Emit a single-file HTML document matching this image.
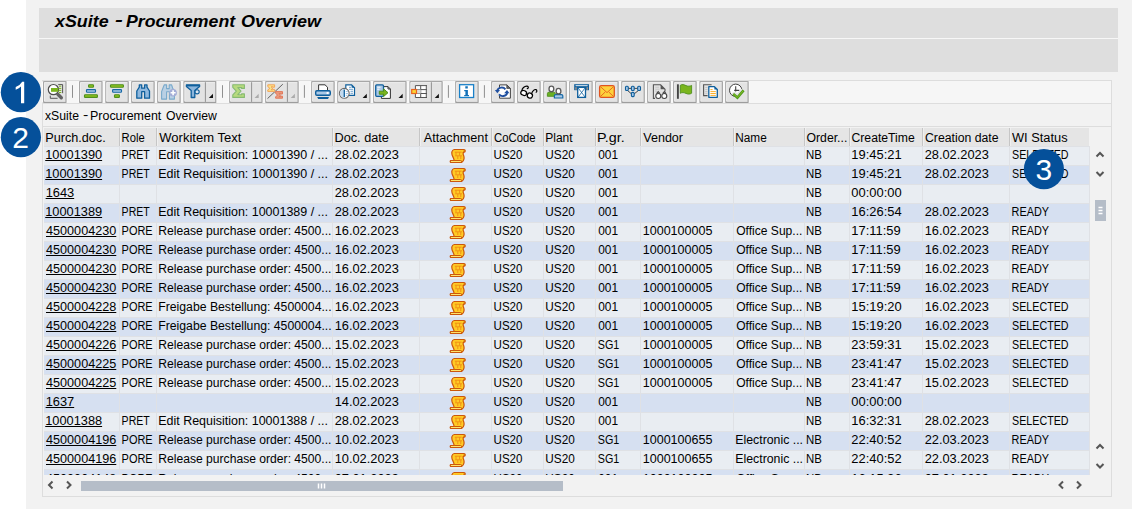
<!DOCTYPE html>
<html>
<head>
<meta charset="utf-8">
<title>xSuite - Procurement Overview</title>
<style>
html,body{margin:0;padding:0;}
body{width:1132px;height:509px;overflow:hidden;background:#fff;position:relative;font-family:"Liberation Sans",sans-serif;font-size:12px;color:#000;}
.abs{position:absolute;}
#bg{left:26px;top:0;width:1106px;height:509px;background:#f2f2f2;}
#bar1{left:39px;top:8px;width:1079px;height:30px;background:#dedede;}
#bar2{left:39px;top:39px;width:1079px;height:33px;background:#dedede;}
#barline{left:39px;top:38px;width:1079px;height:1px;background:#f7f7f7;}
#title{left:0;top:11.2px;font-size:17px;font-weight:bold;font-style:italic;line-height:22px;white-space:nowrap;color:#000;}
#panel{left:42px;top:80px;width:1070px;height:417px;border:1px solid #dddddd;box-sizing:border-box;}
.hl{left:43px;width:1068px;height:1px;background:#dddddd;}
#subtitle{left:0;top:109px;line-height:15px;white-space:nowrap;}
.w{position:absolute;top:0;transform-origin:0 50%;white-space:nowrap;}
.circle{width:40px;height:40px;border-radius:50%;background:#05509a;color:#fff;font-size:29px;line-height:40px;text-align:center;}
/* toolbar */
.tb{top:81px;height:22px;box-sizing:border-box;border:1px solid #a9a9a9;background:#e1e1e1;}
.tb svg{position:absolute;left:0;top:0;}
.tsep{top:85px;width:1px;height:13px;background:#8c8c8c;}
/* grid */
#gridwrap{left:44px;top:128px;width:1046px;height:347px;overflow:hidden;}
table.grid{border-collapse:separate;border-spacing:0;table-layout:fixed;width:1046px;}
.grid th{height:18px;box-sizing:border-box;padding:0 0 0 2px;background:#e5e5e5;font-weight:normal;text-align:left;white-space:nowrap;overflow:hidden;border-right:1px solid #c6c6c6;line-height:16px;padding-top:2px;vertical-align:top;}
.grid th:last-child{border-right:1px solid #f2f2f2;}
.grid th+th{border-left:1px solid #efefef;padding-left:1px;}
.grid td{height:19px;box-sizing:border-box;padding:0 0 0 3px;white-space:nowrap;overflow:hidden;border-right:1px solid #dfe1e5;border-top:1px solid #dfe1e5;line-height:16px;vertical-align:top;}
.grid tbody tr:nth-child(odd) td{background:#e9edf2;}
.grid tbody tr:nth-child(even) td{background:#d6e0f1;}
.grid td.c5{text-align:left;padding:0;line-height:0;}
.grid td.c1{padding-left:2px;}
.t{display:inline-block;transform-origin:0 50%;white-space:nowrap;}
svg.att{display:block;margin:0.5px 0 0 28.7px;}
.chev{fill:none;stroke:#555;stroke-width:2;}
#vthumb{left:1095px;top:200px;width:11px;height:21px;background:#b5bdc8;}
#hbar{left:81px;top:481px;width:482px;height:10px;background:#b5bdc8;}
</style>
</head>
<body>

<div id="bg" class="abs"></div>
<div id="bar1" class="abs"></div>
<div id="barline" class="abs"></div>
<div id="bar2" class="abs"></div>
<div id="title" class="abs"><span class="w" style="left:55.39px;transform:scaleX(1.0498)">xSuite</span><span class="w" style="left:115.31px;transform:translateY(-1.6px) scaleX(1.378)">-</span><span class="w" style="left:125.84px;transform:scaleX(1.0404)">Procurement</span><span class="w" style="left:241.2px;transform:scaleX(1.06)">Overview</span></div>

<div id="panel" class="abs"></div>
<div class="abs" style="left:43px;top:81px;width:1068px;height:22px;background:#f6f6f6"></div>
<div class="abs hl" style="top:103px"></div>
<div class="abs hl" style="top:126px"></div>

<svg class="abs" style="left:40px;top:78px" width="720" height="28" viewBox="40 78 720 28">
<path d="M42.50 81.4V102.3M67.20 81.4V102.3" fill="none" stroke="#fafafa" stroke-width="1.4"/>
<rect x="43.70" y="81.7" width="22.30" height="20.7" fill="#e3e3e3" stroke="#929292" stroke-width="0.95"/>
<path d="M44.50 101V82.6H65.20" fill="none" stroke="#f4f4f4" stroke-width="0.8"/>
<g>
<path d="M58.2 84.6H62.6V93.2" fill="none" stroke="#555" stroke-width="1"/>
<path d="M50.3 95.6V98.3H57.6" fill="none" stroke="#555" stroke-width="1"/>
<path d="M59 86.2H61.3M59 88.4H61.3M59 90.4H61.3M59 92.5H61.3" stroke="#7ab51d" stroke-width="1"/>
<circle cx="53.4" cy="89.6" r="5.1" fill="#fff" stroke="#4d4d4d" stroke-width="1.2"/>
<rect x="51" y="88" width="7.3" height="3.8" fill="#7ab51d"/>
<path d="M57.8 94.3L61.3 97.7" stroke="#636363" stroke-width="3.4" stroke-linecap="round"/>
</g>
<path d="M72.5 85.2V97.8" stroke="#8f8f8f" stroke-width="1"/>
<path d="M78.50 81.4V102.3M103.20 81.4V102.3" fill="none" stroke="#fafafa" stroke-width="1.4"/>
<rect x="79.70" y="81.7" width="22.30" height="20.7" fill="#e3e3e3" stroke="#929292" stroke-width="0.95"/>
<path d="M80.50 101V82.6H101.20" fill="none" stroke="#f4f4f4" stroke-width="0.8"/>
<rect x="88.6" y="84.7" width="4.90" height="2.50" rx="0.7" fill="#8dc21f" stroke="#4f8f1e" stroke-width="1.15"/>
<rect x="86.5" y="89.6" width="9.00" height="2.70" rx="0.7" fill="#a9c8e6" stroke="#1668a6" stroke-width="1.15"/>
<rect x="84.5" y="94.7" width="12.90" height="2.70" rx="0.7" fill="#8dc21f" stroke="#4f8f1e" stroke-width="1.15"/>
<path d="M104.70 81.4V102.3M129.40 81.4V102.3" fill="none" stroke="#fafafa" stroke-width="1.4"/>
<rect x="105.90" y="81.7" width="22.30" height="20.7" fill="#e3e3e3" stroke="#929292" stroke-width="0.95"/>
<path d="M106.70 101V82.6H127.40" fill="none" stroke="#f4f4f4" stroke-width="0.8"/>
<rect x="110.5" y="84.7" width="12.90" height="2.50" rx="0.7" fill="#8dc21f" stroke="#4f8f1e" stroke-width="1.15"/>
<rect x="112.6" y="89.6" width="8.90" height="2.70" rx="0.7" fill="#a9c8e6" stroke="#1668a6" stroke-width="1.15"/>
<rect x="114.5" y="94.7" width="4.90" height="2.70" rx="0.7" fill="#8dc21f" stroke="#4f8f1e" stroke-width="1.15"/>
<path d="M130.60 81.4V102.3M155.30 81.4V102.3" fill="none" stroke="#fafafa" stroke-width="1.4"/>
<rect x="131.80" y="81.7" width="22.30" height="20.7" fill="#e3e3e3" stroke="#929292" stroke-width="0.95"/>
<path d="M132.60 101V82.6H153.30" fill="none" stroke="#f4f4f4" stroke-width="0.8"/>
<path d="M139.3 84.9H141.7V88.2H144.6V84.9H147V87.2L149.5 91V98.2H144.6V91.7H141.7V98.2H136.8V91L139.3 87.2Z" fill="#8fb8de" stroke="#0f5f9c" stroke-width="1.3" stroke-linejoin="round"/>
<path d="M156.60 81.4V102.3M181.30 81.4V102.3" fill="none" stroke="#fafafa" stroke-width="1.4"/>
<rect x="157.80" y="81.7" width="22.30" height="20.7" fill="#e3e3e3" stroke="#929292" stroke-width="0.95"/>
<path d="M158.60 101V82.6H179.30" fill="none" stroke="#f4f4f4" stroke-width="0.8"/>
<path d="M164.2 84.9H166.6V88.6H169.2V84.9H171.6L172.6 88L174.4 91.6V99.1H169.4V91.8H166.6V99.1H161.6V91.6L163 88Z" fill="#b9d0e4" stroke="#78a9cb" stroke-width="1.1" stroke-linejoin="round"/>
<circle cx="173.1" cy="92.8" r="3.8" fill="#a3acd6"/><path d="M173.1 90.3V95.3M170.6 92.8H175.6" stroke="#fff" stroke-width="1.6"/>
<path d="M182.80 81.4V102.3M217.00 81.4V102.3" fill="none" stroke="#fafafa" stroke-width="1.4"/>
<rect x="184.00" y="81.7" width="31.80" height="20.7" fill="#e3e3e3" stroke="#929292" stroke-width="0.95"/>
<path d="M184.80 101V82.6H215.00" fill="none" stroke="#f4f4f4" stroke-width="0.8"/>
<path d="M205.4 82.2V101.9" stroke="#929292" stroke-width="1"/>
<path d="M186.4 84.9H199.6V86.4L194.8 90.5V97.5H191.2V90.5L186.4 86.4Z" fill="#8db6dc" stroke="#0f5f9c" stroke-width="1.3" stroke-linejoin="round"/>
<path d="M186.5 85.6H199.6" stroke="#0f5f9c" stroke-width="1.6"/>
<circle cx="197.1" cy="91.8" r="2.1" fill="#dce6f0" stroke="#0f5f9c" stroke-width="1.1"/>
<path d="M213 93.8V98H208.8Z" fill="#111"/>
<path d="M222.5 85.2V97.8" stroke="#8f8f8f" stroke-width="1"/>
<path d="M228.60 81.4V102.3M263.20 81.4V102.3" fill="none" stroke="#fafafa" stroke-width="1.4"/>
<rect x="229.80" y="81.7" width="32.20" height="20.7" fill="#e3e3e3" stroke="#929292" stroke-width="0.95"/>
<path d="M230.60 101V82.6H261.20" fill="none" stroke="#f4f4f4" stroke-width="0.8"/>
<path d="M251.6 82.2V101.9" stroke="#929292" stroke-width="1"/>
<path d="M232.8 84.8H244.4V88.4H241.6V87.6H237.8L241 91.1L237.8 94.7H241.6V93.9H244.4V97.4H232.8V94.9L236.3 91.1L232.8 87.3Z" fill="#b7da7e" stroke="#86ba72" stroke-width="1.1" stroke-linejoin="round"/>
<path d="M258.7 93.8V98H254.5Z" fill="#ababab"/>
<path d="M264.60 81.4V102.3M299.30 81.4V102.3" fill="none" stroke="#fafafa" stroke-width="1.4"/>
<rect x="265.80" y="81.7" width="32.30" height="20.7" fill="#e3e3e3" stroke="#929292" stroke-width="0.95"/>
<path d="M266.60 101V82.6H297.30" fill="none" stroke="#f4f4f4" stroke-width="0.8"/>
<path d="M287.4 82.2V101.9" stroke="#929292" stroke-width="1"/>
<path d="M267.5 98.6L282.8 84.2" stroke="#555" stroke-width="0.9"/>
<path d="M267.8 84.8H274.6V87.2H273V86.8H271L272.8 88.3L271 89.8H273V89.4H274.6V91.4H267.8V89.9L269.9 88.3L267.8 86.6Z" fill="#fbe285" stroke="#f3a65a" stroke-width="1" stroke-linejoin="round"/>
<path d="M275.6 91.6H282.5V94H280.9V93.6H278.9L280.7 95.1L278.9 96.6H280.9V96.2H282.5V98.2H275.6V96.7L277.7 95.1L275.6 93.4Z" fill="#eb9b7c" stroke="#e2795c" stroke-width="1" stroke-linejoin="round"/>
<path d="M294.9 93.8V98H290.7Z" fill="#ababab"/>
<path d="M304.4 85.2V97.8" stroke="#8f8f8f" stroke-width="1"/>
<path d="M310.60 81.4V102.3M335.30 81.4V102.3" fill="none" stroke="#fafafa" stroke-width="1.4"/>
<rect x="311.80" y="81.7" width="22.30" height="20.7" fill="#e3e3e3" stroke="#929292" stroke-width="0.95"/>
<path d="M312.60 101V82.6H333.30" fill="none" stroke="#f4f4f4" stroke-width="0.8"/>
<path d="M318.6 90.4V84.8H325L327.5 87.2V90.4" fill="#fff" stroke="#333" stroke-width="1"/>
<rect x="315.7" y="90.7" width="14.6" height="4.6" rx="1.2" fill="#a9c8e6" stroke="#0f5f9c" stroke-width="1.4"/>
<rect x="326.6" y="92" width="2" height="2" fill="#fff"/>
<path d="M317.2 97.1H329L328 98.9H318.2Z" fill="#0f5f9c"/>
<path d="M336.70 81.4V102.3M371.10 81.4V102.3" fill="none" stroke="#fafafa" stroke-width="1.4"/>
<rect x="337.90" y="81.7" width="32.00" height="20.7" fill="#e3e3e3" stroke="#929292" stroke-width="0.95"/>
<path d="M338.70 101V82.6H369.10" fill="none" stroke="#f4f4f4" stroke-width="0.8"/>
<path d="M345.8 93V84.9H351.6L354.5 87.8V95.3H349" fill="#fff" stroke="#0f5f9c" stroke-width="1.2"/>
<path d="M351.6 84.9V87.8H354.5Z" fill="#0f5f9c"/>
<path d="M349 87.3H351M349 89.3H353M350.5 91.3H353M350.5 93.3H353" stroke="#5b95c8" stroke-width="0.9"/>
<circle cx="344.3" cy="93.3" r="4.9" fill="#fff" stroke="#6a6a6a" stroke-width="1.1"/>
<path d="M344.3 88.9A4.4 4.4 0 0 0 344.3 97.7Z" fill="#c3daef"/>
<path d="M344.3 89.6V97" stroke="#0f5f9c" stroke-width="1.3"/>
<path d="M345.8 91.5H347.8M345.8 93.5H348M345.8 95.3H347.5" stroke="#9cc0e2" stroke-width="0.9"/>
<path d="M366.8 93.8V98H362.6Z" fill="#111"/>
<path d="M372.60 81.4V102.3M407.20 81.4V102.3" fill="none" stroke="#fafafa" stroke-width="1.4"/>
<rect x="373.80" y="81.7" width="32.20" height="20.7" fill="#e3e3e3" stroke="#929292" stroke-width="0.95"/>
<path d="M374.60 101V82.6H405.20" fill="none" stroke="#f4f4f4" stroke-width="0.8"/>
<path d="M384 86.6H388L390.4 89V98.4H381.4V96.8" fill="#fff" stroke="#333" stroke-width="1"/>
<path d="M388 86.6V89H390.4" fill="none" stroke="#333" stroke-width="1"/>
<rect x="375.7" y="84.9" width="7.8" height="11.4" rx="1" fill="#a9c8e6" stroke="#0f5f9c" stroke-width="1.3"/>
<path d="M377.2 87.2H380.5M377.2 89.2H379.5" stroke="#fff" stroke-width="1"/>
<path d="M379.3 91.2H383.6V88.9L388 92.7L383.6 96.5V94.2H379.3Z" fill="#7ab51d" stroke="#4f8f1e" stroke-width="1" stroke-linejoin="round"/>
<path d="M402.7 93.8V98H398.5Z" fill="#111"/>
<path d="M408.80 81.4V102.3M443.30 81.4V102.3" fill="none" stroke="#fafafa" stroke-width="1.4"/>
<rect x="410.00" y="81.7" width="32.10" height="20.7" fill="#e3e3e3" stroke="#929292" stroke-width="0.95"/>
<path d="M410.80 101V82.6H441.30" fill="none" stroke="#f4f4f4" stroke-width="0.8"/>
<path d="M431.4 82.2V101.9" stroke="#929292" stroke-width="1"/>
<rect x="415.4" y="85.6" width="11.2" height="11.9" fill="#fff"/>
<path d="M427 85.6H415.4V97.5H427M420.7 85.6V97.5M426.3 85.6V97.5M415.4 89.6H427M415.4 93.5H427" fill="none" stroke="#555" stroke-width="1"/>
<rect x="416.9" y="89.6" width="3.8" height="3.9" fill="#ddd"/>
<rect x="411.7" y="89.5" width="4.8" height="4" fill="#fcd535" stroke="#e8641e" stroke-width="1.2"/>
<path d="M438.9 93.8V98H434.7Z" fill="#111"/>
<path d="M448.4 85.2V97.8" stroke="#8f8f8f" stroke-width="1"/>
<path d="M454.60 81.4V102.3M479.30 81.4V102.3" fill="none" stroke="#fafafa" stroke-width="1.4"/>
<rect x="455.80" y="81.7" width="22.30" height="20.7" fill="#e3e3e3" stroke="#929292" stroke-width="0.95"/>
<path d="M456.60 101V82.6H477.30" fill="none" stroke="#f4f4f4" stroke-width="0.8"/>
<rect x="459.6" y="84.7" width="14" height="12.8" fill="#fff" stroke="#1a80c8" stroke-width="1.3"/>
<path d="M465.3 86.3H467.8V88.5H465.3ZM464.2 90H467.9V95H469V96.2H464.2V95H465.4V91.2H464.2Z" fill="#1371b8"/>
<path d="M484.4 85.2V97.8" stroke="#8f8f8f" stroke-width="1"/>
<path d="M490.60 81.4V102.3M515.30 81.4V102.3" fill="none" stroke="#fafafa" stroke-width="1.4"/>
<rect x="491.80" y="81.7" width="22.30" height="20.7" fill="#e3e3e3" stroke="#929292" stroke-width="0.95"/>
<path d="M492.60 101V82.6H513.30" fill="none" stroke="#f4f4f4" stroke-width="0.8"/>
<path d="M499.5 89V84.9H506.8L510.4 88.4V98.2H499.5V96" fill="#fff" stroke="#444" stroke-width="1"/>
<path d="M506.8 84.9V88.4H510.4Z" fill="#666" stroke="#444" stroke-width="0.8"/>
<path d="M497.2 90.6A4.6 4.2 0 0 1 505.4 89.3" fill="none" stroke="#1f4fa0" stroke-width="1.9"/>
<path d="M507.2 92.9A4.6 4.2 0 0 1 499 94.3" fill="none" stroke="#1f4fa0" stroke-width="1.9"/>
<path d="M494.9 90H500L497.3 93.3Z" fill="#1f4fa0"/>
<path d="M509.4 93.3H504.2L507 90Z" fill="#1f4fa0"/>
<path d="M516.60 81.4V102.3M541.30 81.4V102.3" fill="none" stroke="#fafafa" stroke-width="1.4"/>
<rect x="517.80" y="81.7" width="22.30" height="20.7" fill="#e3e3e3" stroke="#929292" stroke-width="0.95"/>
<path d="M518.60 101V82.6H539.30" fill="none" stroke="#f4f4f4" stroke-width="0.8"/>
<g fill="none" stroke="#000" stroke-width="1.2" stroke-linecap="round"><ellipse cx="523.7" cy="92.9" rx="3" ry="2.4" transform="rotate(25 523.7 92.9)" fill="#fff"/><ellipse cx="529.9" cy="95.6" rx="2.6" ry="2.5" transform="rotate(25 529.9 95.6)" fill="#fff"/><path d="M526.3 93.4L527.6 94.2"/><path d="M522 90.8C521.8 88.5 524.5 86 527 86.2C528.6 86.4 528.8 88.2 527.3 88.6"/><path d="M531.6 93.6C532.5 91 534.5 89 536 89.6C537.2 90.2 537 91.8 536.2 92.2"/></g>
<path d="M542.70 81.4V102.3M567.40 81.4V102.3" fill="none" stroke="#fafafa" stroke-width="1.4"/>
<rect x="543.90" y="81.7" width="22.30" height="20.7" fill="#e3e3e3" stroke="#929292" stroke-width="0.95"/>
<path d="M544.70 101V82.6H565.40" fill="none" stroke="#f4f4f4" stroke-width="0.8"/>
<path d="M547.4 96.3V93.6Q547.4 92.2 549 92.2H553.8Q555.3 92.2 555.3 93.6V96.3Z" fill="#6ab023" stroke="#4f8f1e" stroke-width="0.9"/>
<ellipse cx="551.4" cy="88.9" rx="2.4" ry="2.8" fill="#fff" stroke="#5a5a5a" stroke-width="1.3"/>
<path d="M554.4 98V95.7Q554.4 94.6 555.8 94.6H561.4Q562.8 94.6 562.8 95.7V98Z" fill="#a9c8e6" stroke="#1668a6" stroke-width="1.2"/>
<ellipse cx="558.5" cy="91.2" rx="2.4" ry="2.8" fill="#fff" stroke="#5a5a5a" stroke-width="1.3"/>
<path d="M568.60 81.4V102.3M593.30 81.4V102.3" fill="none" stroke="#fafafa" stroke-width="1.4"/>
<rect x="569.80" y="81.7" width="22.30" height="20.7" fill="#e3e3e3" stroke="#929292" stroke-width="0.95"/>
<path d="M570.60 101V82.6H591.30" fill="none" stroke="#f4f4f4" stroke-width="0.8"/>
<rect x="574.2" y="84.2" width="14.8" height="6" fill="#0f5f9c"/>
<path d="M575.6 85.7H587.6" stroke="#fff" stroke-width="0.9"/>
<rect x="575.2" y="87.2" width="1.6" height="2.6" fill="#9a8f88"/><rect x="586.4" y="87.2" width="1.6" height="2.6" fill="#9a8f88"/>
<rect x="577.7" y="87.4" width="7.8" height="10" fill="#fff" stroke="#0f5f9c" stroke-width="1.3"/>
<path d="M578.2 88L585 97M585 88L578.2 97" stroke="#0f5f9c" stroke-width="0.8"/>
<path d="M594.60 81.4V102.3M619.30 81.4V102.3" fill="none" stroke="#fafafa" stroke-width="1.4"/>
<rect x="595.80" y="81.7" width="22.30" height="20.7" fill="#e3e3e3" stroke="#929292" stroke-width="0.95"/>
<path d="M596.60 101V82.6H617.30" fill="none" stroke="#f4f4f4" stroke-width="0.8"/>
<rect x="599.6" y="85.6" width="14.7" height="11.7" rx="1.6" fill="#fdd23c" stroke="#e0531f" stroke-width="1.3"/>
<path d="M600.6 86.8L607 92.6L613.4 86.8M600.6 96.4L605.2 92M613.4 96.4L608.8 92" fill="none" stroke="#ea6a1e" stroke-width="1"/>
<path d="M620.70 81.4V102.3M645.40 81.4V102.3" fill="none" stroke="#fafafa" stroke-width="1.4"/>
<rect x="621.90" y="81.7" width="22.30" height="20.7" fill="#e3e3e3" stroke="#929292" stroke-width="0.95"/>
<path d="M622.70 101V82.6H643.40" fill="none" stroke="#f4f4f4" stroke-width="0.8"/>
<path d="M627 88.4H639M627 90L632.8 95L639 90" fill="none" stroke="#333" stroke-width="0.9"/>
<rect x="625.5" y="86.3" width="2.8" height="4.2" rx="1" fill="#a9c8e6" stroke="#0f5f9c" stroke-width="1.1"/>
<rect x="631.4" y="86.3" width="2.8" height="4.2" rx="1" fill="#a9c8e6" stroke="#0f5f9c" stroke-width="1.1"/>
<rect x="637.7" y="86.3" width="2.8" height="4.2" rx="1" fill="#a9c8e6" stroke="#0f5f9c" stroke-width="1.1"/>
<rect x="631.4" y="92.4" width="2.8" height="4.2" rx="1" fill="#a9c8e6" stroke="#0f5f9c" stroke-width="1.1"/>
<path d="M646.60 81.4V102.3M671.30 81.4V102.3" fill="none" stroke="#fafafa" stroke-width="1.4"/>
<rect x="647.80" y="81.7" width="22.30" height="20.7" fill="#e3e3e3" stroke="#929292" stroke-width="0.95"/>
<path d="M648.60 101V82.6H669.30" fill="none" stroke="#f4f4f4" stroke-width="0.8"/>
<path d="M655 98.4H653.4V84.8H660.6L665 89.2V91.5" fill="none" stroke="#555" stroke-width="1.1"/>
<path d="M660.6 84.8V89.2H665Z" fill="#555"/>
<path d="M655.2 87.2H659M655.2 89.2H659.5M655.2 91.2H657" stroke="#c4c4c4" stroke-width="0.9"/>
<g fill="none" stroke="#444" stroke-width="1.1"><circle cx="658.3" cy="96" r="2.5" fill="#fff"/><circle cx="664.3" cy="96" r="2.5" fill="#fff"/><path d="M656.6 93.6L658.2 91.6L659.8 93.4M662.8 93.4L664.4 91.6L666 93.6"/></g>
<path d="M672.60 81.4V102.3M697.30 81.4V102.3" fill="none" stroke="#fafafa" stroke-width="1.4"/>
<rect x="673.80" y="81.7" width="22.30" height="20.7" fill="#e3e3e3" stroke="#929292" stroke-width="0.95"/>
<path d="M674.60 101V82.6H695.30" fill="none" stroke="#f4f4f4" stroke-width="0.8"/>
<path d="M677.9 84.3V98.8" stroke="#444" stroke-width="1.9"/>
<path d="M680.3 85.3C682 84 684 84.6 686 85.6C688 86.5 690 86.3 691.6 85.4V93.2C690 94.3 688 94.4 686 93.4C684 92.5 682 92.2 680.3 93.3Z" fill="#7ab51d" stroke="#4f8f1e" stroke-width="0.9"/>
<path d="M698.80 81.4V102.3M723.50 81.4V102.3" fill="none" stroke="#fafafa" stroke-width="1.4"/>
<rect x="700.00" y="81.7" width="22.30" height="20.7" fill="#e3e3e3" stroke="#929292" stroke-width="0.95"/>
<path d="M700.80 101V82.6H721.50" fill="none" stroke="#f4f4f4" stroke-width="0.8"/>
<path d="M711.6 84.8H703.6V95.6H707.6" fill="none" stroke="#555" stroke-width="1.1"/>
<path d="M705.2 87.5H707.5M705.2 89.5H707.5M705.2 91.5H707.5M705.2 93.3H707.5" stroke="#c4c4c4" stroke-width="0.9"/>
<path d="M708.8 86.6H714.4L717.3 89.5V97.3H708.8Z" fill="#fff" stroke="#0f5f9c" stroke-width="1.3" stroke-linejoin="round"/>
<path d="M714.4 86.6V89.5H717.3Z" fill="#0f5f9c"/>
<path d="M710.4 89.6H712.6M710.4 91.6H715.8M710.4 93.5H715.8M710.4 95.4H715.8" stroke="#fbb02d" stroke-width="1"/>
<path d="M724.60 81.4V102.3M749.30 81.4V102.3" fill="none" stroke="#fafafa" stroke-width="1.4"/>
<rect x="725.80" y="81.7" width="22.30" height="20.7" fill="#e3e3e3" stroke="#929292" stroke-width="0.95"/>
<path d="M726.60 101V82.6H747.30" fill="none" stroke="#f4f4f4" stroke-width="0.8"/>
<circle cx="735.7" cy="90.3" r="6.2" fill="#fff" stroke="#444" stroke-width="1"/>
<path d="M735.7 86.2V91.4M734.2 90.4H739.4" fill="none" stroke="#444" stroke-width="1.1"/>
<path d="M731.5 93.5L737.3 98.6L745 91.5L741 88.5L737.2 93.6L734.5 91.5Z" fill="#e3e3e3"/>
<path d="M733.2 94L737.4 97.6L743.6 90.3" fill="none" stroke="#4f9a1e" stroke-width="2.6"/>
<path d="M733.4 94L737.4 97.4L743.4 90.5" fill="none" stroke="#8dc21f" stroke-width="0.9"/>
</svg>


<div id="subtitle" class="abs"><span class="w" style="left:44.65px;transform:scaleX(1.0185)">xSuite</span><span class="w" style="left:82.63px;transform:translateY(-0.8px) scaleX(1.333)">-</span><span class="w" style="left:90.16px;transform:scaleX(1.0376)">Procurement</span><span class="w" style="left:165.79px;transform:scaleX(1.018)">Overview</span></div>

<div id="gridwrap" class="abs">
<table class="grid"><colgroup><col style="width:76px"><col style="width:37px"><col style="width:176px"><col style="width:87px"><col style="width:72px"><col style="width:52px"><col style="width:52px"><col style="width:45px"><col style="width:93px"><col style="width:71px"><col style="width:45px"><col style="width:73px"><col style="width:87px"><col style="width:80px"></colgroup>
<thead><tr><th class="c1"><span class="t" style="transform:translate(-0.80px,0px) scaleX(1.0543)">Purch.doc.</span></th><th class="c2"><span class="t" style="transform:translate(-0.44px,0px) scaleX(0.9355)">Role</span></th><th class="c3"><span class="t" style="transform:translate(0.25px,0px) scaleX(1.0861)">Workitem Text</span></th><th class="c4"><span class="t" style="transform:translate(-0.56px,0px) scaleX(1.0603)">Doc. date</span></th><th class="c5"><span class="t" style="transform:translate(1.75px,0px) scaleX(1.0576)">Attachment</span></th><th class="c6"><span class="t" style="transform:translate(0.03px,0px) scaleX(0.9419)">CoCode</span></th><th class="c7"><span class="t" style="transform:translate(-0.75px,0px) scaleX(1.0000)">Plant</span></th><th class="c8"><span class="t" style="transform:translate(-0.94px,0px) scaleX(1.1905)">P.gr.</span></th><th class="c9"><span class="t" style="transform:translate(0.25px,0px) scaleX(1.0461)">Vendor</span></th><th class="c10"><span class="t" style="transform:translate(-0.73px,0px) scaleX(0.9836)">Name</span></th><th class="c11"><span class="t" style="transform:translate(-0.51px,0px) scaleX(1.0195)">Order...</span></th><th class="c12"><span class="t" style="transform:translate(-0.51px,0px) scaleX(1.0163)">CreateTime</span></th><th class="c13"><span class="t" style="transform:translate(-0.01px,0px) scaleX(1.0211)">Creation date</span></th><th class="c14"><span class="t" style="transform:translate(0.00px,0px) scaleX(1.0680)">WI Status</span></th></tr></thead>
<tbody>
<tr><td class="c1"><span class="t" style="transform:translate(-0.77px,0px) scaleX(1.0654)"><u>10001390</u></span></td><td class="c2"><span class="t" style="transform:translate(-1.38px,0px) scaleX(0.8780)">PRET</span></td><td class="c3"><span class="t" style="transform:translate(-1.79px,0px) scaleX(1.0387)">Edit Requisition: 10001390 / ...</span></td><td class="c4"><span class="t" style="transform:translate(-1.37px,0px) scaleX(1.0692)">28.02.2023</span></td><td class="c5"><svg class="att" width="17" height="16" viewBox="0 0 17 16"><path d="M5.2 1.5H14.6Q16.7 1.6 16 3.7L14.2 4.6V6.5Q15.3 8.5 15 10.8Q14.6 13.2 12.6 14.5H1.7Q0.7 13.6 1.7 12.5H5.2Q4.800 10.500 3.800 8.600Q2.500 6.200 2.900 3.900Q3.400 1.800 5.200 1.500Z" fill="#ffcb25" stroke="#cb570b" stroke-width="1.2" stroke-linejoin="round"/><path d="M2 13.5H11.800" stroke="#ffe673" stroke-width="0.9"/><path d="M5.2 12.5H11.600Q12.800 12.600 13 14" fill="none" stroke="#cb570b" stroke-width="1"/><path d="M5.8 4.2H12.600M7 4.200V7.500M10.600 4.200V7.500M6.200 7.800H13M8.800 8V11M11.800 8V11" fill="none" stroke="#f08a12" stroke-width="0.9"/><path d="M14.3 4.4Q15.400 3.600 15 2.600" fill="none" stroke="#cb570b" stroke-width="0.9"/></svg></td><td class="c6"><span class="t" style="transform:translate(-1.46px,0px) scaleX(0.9649)">US20</span></td><td class="c7"><span class="t" style="transform:translate(-1.73px,0px) scaleX(0.9825)">US20</span></td><td class="c8"><span class="t" style="transform:translate(-0.79px,0px) scaleX(0.9895)">001</span></td><td class="c9"></td><td class="c10"></td><td class="c11"><span class="t" style="transform:translate(-1.95px,0px) scaleX(0.9500)">NB</span></td><td class="c12"><span class="t" style="transform:translate(-1.68px,0px) scaleX(1.0762)">19:45:21</span></td><td class="c13"><span class="t" style="transform:translate(-1.37px,0px) scaleX(1.0692)">28.02.2023</span></td><td class="c14"><span class="t" style="transform:translate(-0.95px,0px) scaleX(0.8916)">SELECTED</span></td></tr>
<tr><td class="c1"><span class="t" style="transform:translate(-0.77px,0px) scaleX(1.0654)"><u>10001390</u></span></td><td class="c2"><span class="t" style="transform:translate(-1.38px,0px) scaleX(0.8780)">PRET</span></td><td class="c3"><span class="t" style="transform:translate(-1.79px,0px) scaleX(1.0387)">Edit Requisition: 10001390 / ...</span></td><td class="c4"><span class="t" style="transform:translate(-1.37px,0px) scaleX(1.0692)">28.02.2023</span></td><td class="c5"><svg class="att" width="17" height="16" viewBox="0 0 17 16"><path d="M5.2 1.5H14.6Q16.7 1.6 16 3.7L14.2 4.6V6.5Q15.3 8.5 15 10.8Q14.6 13.2 12.6 14.5H1.7Q0.7 13.6 1.7 12.5H5.2Q4.800 10.500 3.800 8.600Q2.500 6.200 2.900 3.900Q3.400 1.800 5.200 1.500Z" fill="#ffcb25" stroke="#cb570b" stroke-width="1.2" stroke-linejoin="round"/><path d="M2 13.5H11.800" stroke="#ffe673" stroke-width="0.9"/><path d="M5.2 12.5H11.600Q12.800 12.600 13 14" fill="none" stroke="#cb570b" stroke-width="1"/><path d="M5.8 4.2H12.600M7 4.200V7.500M10.600 4.200V7.500M6.200 7.800H13M8.800 8V11M11.800 8V11" fill="none" stroke="#f08a12" stroke-width="0.9"/><path d="M14.3 4.4Q15.400 3.600 15 2.600" fill="none" stroke="#cb570b" stroke-width="0.9"/></svg></td><td class="c6"><span class="t" style="transform:translate(-1.46px,0px) scaleX(0.9649)">US20</span></td><td class="c7"><span class="t" style="transform:translate(-1.73px,0px) scaleX(0.9825)">US20</span></td><td class="c8"><span class="t" style="transform:translate(-0.79px,0px) scaleX(0.9895)">001</span></td><td class="c9"></td><td class="c10"></td><td class="c11"><span class="t" style="transform:translate(-1.95px,0px) scaleX(0.9500)">NB</span></td><td class="c12"><span class="t" style="transform:translate(-1.68px,0px) scaleX(1.0762)">19:45:21</span></td><td class="c13"><span class="t" style="transform:translate(-1.37px,0px) scaleX(1.0692)">28.02.2023</span></td><td class="c14"><span class="t" style="transform:translate(-0.95px,0px) scaleX(0.8916)">SELECTED</span></td></tr>
<tr><td class="c1"><span class="t" style="transform:translate(-0.37px,0px) scaleX(1.0693)"><u>1643</u></span></td><td class="c2"></td><td class="c3"></td><td class="c4"><span class="t" style="transform:translate(-1.37px,0px) scaleX(1.0692)">28.02.2023</span></td><td class="c5"><svg class="att" width="17" height="16" viewBox="0 0 17 16"><path d="M5.2 1.5H14.6Q16.7 1.6 16 3.7L14.2 4.6V6.5Q15.3 8.5 15 10.8Q14.6 13.2 12.6 14.5H1.7Q0.7 13.6 1.7 12.5H5.2Q4.800 10.500 3.800 8.600Q2.500 6.200 2.900 3.900Q3.400 1.800 5.200 1.500Z" fill="#ffcb25" stroke="#cb570b" stroke-width="1.2" stroke-linejoin="round"/><path d="M2 13.5H11.800" stroke="#ffe673" stroke-width="0.9"/><path d="M5.2 12.5H11.600Q12.800 12.600 13 14" fill="none" stroke="#cb570b" stroke-width="1"/><path d="M5.8 4.2H12.600M7 4.200V7.500M10.600 4.200V7.500M6.200 7.800H13M8.800 8V11M11.800 8V11" fill="none" stroke="#f08a12" stroke-width="0.9"/><path d="M14.3 4.4Q15.400 3.600 15 2.600" fill="none" stroke="#cb570b" stroke-width="0.9"/></svg></td><td class="c6"><span class="t" style="transform:translate(-1.46px,0px) scaleX(0.9649)">US20</span></td><td class="c7"><span class="t" style="transform:translate(-1.73px,0px) scaleX(0.9825)">US20</span></td><td class="c8"><span class="t" style="transform:translate(-0.79px,0px) scaleX(0.9895)">001</span></td><td class="c9"></td><td class="c10"></td><td class="c11"><span class="t" style="transform:translate(-1.95px,0px) scaleX(0.9500)">NB</span></td><td class="c12"><span class="t" style="transform:translate(-1.68px,0px) scaleX(1.0762)">00:00:00</span></td><td class="c13"></td><td class="c14"></td></tr>
<tr><td class="c1"><span class="t" style="transform:translate(-0.77px,0px) scaleX(1.0654)"><u>10001389</u></span></td><td class="c2"><span class="t" style="transform:translate(-1.38px,0px) scaleX(0.8780)">PRET</span></td><td class="c3"><span class="t" style="transform:translate(-1.79px,0px) scaleX(1.0387)">Edit Requisition: 10001389 / ...</span></td><td class="c4"><span class="t" style="transform:translate(-1.37px,0px) scaleX(1.0692)">28.02.2023</span></td><td class="c5"><svg class="att" width="17" height="16" viewBox="0 0 17 16"><path d="M5.2 1.5H14.6Q16.7 1.6 16 3.7L14.2 4.6V6.5Q15.3 8.5 15 10.8Q14.6 13.2 12.6 14.5H1.7Q0.7 13.6 1.7 12.5H5.2Q4.800 10.500 3.800 8.600Q2.500 6.200 2.900 3.900Q3.400 1.800 5.200 1.500Z" fill="#ffcb25" stroke="#cb570b" stroke-width="1.2" stroke-linejoin="round"/><path d="M2 13.5H11.800" stroke="#ffe673" stroke-width="0.9"/><path d="M5.2 12.5H11.600Q12.800 12.600 13 14" fill="none" stroke="#cb570b" stroke-width="1"/><path d="M5.8 4.2H12.600M7 4.200V7.500M10.600 4.200V7.500M6.200 7.800H13M8.800 8V11M11.800 8V11" fill="none" stroke="#f08a12" stroke-width="0.9"/><path d="M14.3 4.4Q15.400 3.600 15 2.600" fill="none" stroke="#cb570b" stroke-width="0.9"/></svg></td><td class="c6"><span class="t" style="transform:translate(-1.46px,0px) scaleX(0.9649)">US20</span></td><td class="c7"><span class="t" style="transform:translate(-1.73px,0px) scaleX(0.9825)">US20</span></td><td class="c8"><span class="t" style="transform:translate(-0.79px,0px) scaleX(0.9895)">001</span></td><td class="c9"></td><td class="c10"></td><td class="c11"><span class="t" style="transform:translate(-1.95px,0px) scaleX(0.9500)">NB</span></td><td class="c12"><span class="t" style="transform:translate(-1.68px,0px) scaleX(1.0762)">16:26:54</span></td><td class="c13"><span class="t" style="transform:translate(-1.37px,0px) scaleX(1.0692)">28.02.2023</span></td><td class="c14"><span class="t" style="transform:translate(-1.41px,0px) scaleX(0.9062)">READY</span></td></tr>
<tr><td class="c1"><span class="t" style="transform:translate(-0.01px,0px) scaleX(1.0530)"><u>4500004230</u></span></td><td class="c2"><span class="t" style="transform:translate(-1.41px,0px) scaleX(0.9141)">PORE</span></td><td class="c3"><span class="t" style="transform:translate(-1.76px,0px) scaleX(1.0103)">Release purchase order: 4500...</span></td><td class="c4"><span class="t" style="transform:translate(-1.37px,0px) scaleX(1.0692)">16.02.2023</span></td><td class="c5"><svg class="att" width="17" height="16" viewBox="0 0 17 16"><path d="M5.2 1.5H14.6Q16.7 1.6 16 3.7L14.2 4.6V6.5Q15.3 8.5 15 10.8Q14.6 13.2 12.6 14.5H1.7Q0.7 13.6 1.7 12.5H5.2Q4.800 10.500 3.800 8.600Q2.500 6.200 2.900 3.900Q3.400 1.800 5.200 1.500Z" fill="#ffcb25" stroke="#cb570b" stroke-width="1.2" stroke-linejoin="round"/><path d="M2 13.5H11.800" stroke="#ffe673" stroke-width="0.9"/><path d="M5.2 12.5H11.600Q12.800 12.600 13 14" fill="none" stroke="#cb570b" stroke-width="1"/><path d="M5.8 4.2H12.600M7 4.200V7.500M10.600 4.200V7.500M6.200 7.800H13M8.800 8V11M11.800 8V11" fill="none" stroke="#f08a12" stroke-width="0.9"/><path d="M14.3 4.4Q15.400 3.600 15 2.600" fill="none" stroke="#cb570b" stroke-width="0.9"/></svg></td><td class="c6"><span class="t" style="transform:translate(-1.46px,0px) scaleX(0.9649)">US20</span></td><td class="c7"><span class="t" style="transform:translate(-1.73px,0px) scaleX(0.9825)">US20</span></td><td class="c8"><span class="t" style="transform:translate(-0.79px,0px) scaleX(0.9895)">001</span></td><td class="c9"><span class="t" style="transform:translate(-1.30px,0px) scaleX(1.0460)">1000100005</span></td><td class="c10"><span class="t" style="transform:translate(-0.75px,0px) scaleX(1.0039)">Office Sup...</span></td><td class="c11"><span class="t" style="transform:translate(-1.95px,0px) scaleX(0.9500)">NB</span></td><td class="c12"><span class="t" style="transform:translate(-1.68px,0px) scaleX(1.0762)">17:11:59</span></td><td class="c13"><span class="t" style="transform:translate(-1.37px,0px) scaleX(1.0692)">16.02.2023</span></td><td class="c14"><span class="t" style="transform:translate(-1.41px,0px) scaleX(0.9062)">READY</span></td></tr>
<tr><td class="c1"><span class="t" style="transform:translate(-0.01px,0px) scaleX(1.0530)"><u>4500004230</u></span></td><td class="c2"><span class="t" style="transform:translate(-1.41px,0px) scaleX(0.9141)">PORE</span></td><td class="c3"><span class="t" style="transform:translate(-1.76px,0px) scaleX(1.0103)">Release purchase order: 4500...</span></td><td class="c4"><span class="t" style="transform:translate(-1.37px,0px) scaleX(1.0692)">16.02.2023</span></td><td class="c5"><svg class="att" width="17" height="16" viewBox="0 0 17 16"><path d="M5.2 1.5H14.6Q16.7 1.6 16 3.7L14.2 4.6V6.5Q15.3 8.5 15 10.8Q14.6 13.2 12.6 14.5H1.7Q0.7 13.6 1.7 12.5H5.2Q4.800 10.500 3.800 8.600Q2.500 6.200 2.900 3.900Q3.400 1.800 5.200 1.500Z" fill="#ffcb25" stroke="#cb570b" stroke-width="1.2" stroke-linejoin="round"/><path d="M2 13.5H11.800" stroke="#ffe673" stroke-width="0.9"/><path d="M5.2 12.5H11.600Q12.800 12.600 13 14" fill="none" stroke="#cb570b" stroke-width="1"/><path d="M5.8 4.2H12.600M7 4.200V7.500M10.600 4.200V7.500M6.200 7.800H13M8.800 8V11M11.800 8V11" fill="none" stroke="#f08a12" stroke-width="0.9"/><path d="M14.3 4.4Q15.400 3.600 15 2.600" fill="none" stroke="#cb570b" stroke-width="0.9"/></svg></td><td class="c6"><span class="t" style="transform:translate(-1.46px,0px) scaleX(0.9649)">US20</span></td><td class="c7"><span class="t" style="transform:translate(-1.73px,0px) scaleX(0.9825)">US20</span></td><td class="c8"><span class="t" style="transform:translate(-0.79px,0px) scaleX(0.9895)">001</span></td><td class="c9"><span class="t" style="transform:translate(-1.30px,0px) scaleX(1.0460)">1000100005</span></td><td class="c10"><span class="t" style="transform:translate(-0.75px,0px) scaleX(1.0039)">Office Sup...</span></td><td class="c11"><span class="t" style="transform:translate(-1.95px,0px) scaleX(0.9500)">NB</span></td><td class="c12"><span class="t" style="transform:translate(-1.68px,0px) scaleX(1.0762)">17:11:59</span></td><td class="c13"><span class="t" style="transform:translate(-1.37px,0px) scaleX(1.0692)">16.02.2023</span></td><td class="c14"><span class="t" style="transform:translate(-1.41px,0px) scaleX(0.9062)">READY</span></td></tr>
<tr><td class="c1"><span class="t" style="transform:translate(-0.01px,0px) scaleX(1.0530)"><u>4500004230</u></span></td><td class="c2"><span class="t" style="transform:translate(-1.41px,0px) scaleX(0.9141)">PORE</span></td><td class="c3"><span class="t" style="transform:translate(-1.76px,0px) scaleX(1.0103)">Release purchase order: 4500...</span></td><td class="c4"><span class="t" style="transform:translate(-1.37px,0px) scaleX(1.0692)">16.02.2023</span></td><td class="c5"><svg class="att" width="17" height="16" viewBox="0 0 17 16"><path d="M5.2 1.5H14.6Q16.7 1.6 16 3.7L14.2 4.6V6.5Q15.3 8.5 15 10.8Q14.6 13.2 12.6 14.5H1.7Q0.7 13.6 1.7 12.5H5.2Q4.800 10.500 3.800 8.600Q2.500 6.200 2.900 3.900Q3.400 1.800 5.200 1.500Z" fill="#ffcb25" stroke="#cb570b" stroke-width="1.2" stroke-linejoin="round"/><path d="M2 13.5H11.800" stroke="#ffe673" stroke-width="0.9"/><path d="M5.2 12.5H11.600Q12.800 12.600 13 14" fill="none" stroke="#cb570b" stroke-width="1"/><path d="M5.8 4.2H12.600M7 4.200V7.500M10.600 4.200V7.500M6.200 7.800H13M8.800 8V11M11.800 8V11" fill="none" stroke="#f08a12" stroke-width="0.9"/><path d="M14.3 4.4Q15.400 3.600 15 2.600" fill="none" stroke="#cb570b" stroke-width="0.9"/></svg></td><td class="c6"><span class="t" style="transform:translate(-1.46px,0px) scaleX(0.9649)">US20</span></td><td class="c7"><span class="t" style="transform:translate(-1.73px,0px) scaleX(0.9825)">US20</span></td><td class="c8"><span class="t" style="transform:translate(-0.79px,0px) scaleX(0.9895)">001</span></td><td class="c9"><span class="t" style="transform:translate(-1.30px,0px) scaleX(1.0460)">1000100005</span></td><td class="c10"><span class="t" style="transform:translate(-0.75px,0px) scaleX(1.0039)">Office Sup...</span></td><td class="c11"><span class="t" style="transform:translate(-1.95px,0px) scaleX(0.9500)">NB</span></td><td class="c12"><span class="t" style="transform:translate(-1.68px,0px) scaleX(1.0762)">17:11:59</span></td><td class="c13"><span class="t" style="transform:translate(-1.37px,0px) scaleX(1.0692)">16.02.2023</span></td><td class="c14"><span class="t" style="transform:translate(-1.41px,0px) scaleX(0.9062)">READY</span></td></tr>
<tr><td class="c1"><span class="t" style="transform:translate(-0.01px,0px) scaleX(1.0530)"><u>4500004230</u></span></td><td class="c2"><span class="t" style="transform:translate(-1.41px,0px) scaleX(0.9141)">PORE</span></td><td class="c3"><span class="t" style="transform:translate(-1.76px,0px) scaleX(1.0103)">Release purchase order: 4500...</span></td><td class="c4"><span class="t" style="transform:translate(-1.37px,0px) scaleX(1.0692)">16.02.2023</span></td><td class="c5"><svg class="att" width="17" height="16" viewBox="0 0 17 16"><path d="M5.2 1.5H14.6Q16.7 1.6 16 3.7L14.2 4.6V6.5Q15.3 8.5 15 10.8Q14.6 13.2 12.6 14.5H1.7Q0.7 13.6 1.7 12.5H5.2Q4.800 10.500 3.800 8.600Q2.500 6.200 2.900 3.900Q3.400 1.800 5.200 1.500Z" fill="#ffcb25" stroke="#cb570b" stroke-width="1.2" stroke-linejoin="round"/><path d="M2 13.5H11.800" stroke="#ffe673" stroke-width="0.9"/><path d="M5.2 12.5H11.600Q12.800 12.600 13 14" fill="none" stroke="#cb570b" stroke-width="1"/><path d="M5.8 4.2H12.600M7 4.200V7.500M10.600 4.200V7.500M6.200 7.800H13M8.800 8V11M11.800 8V11" fill="none" stroke="#f08a12" stroke-width="0.9"/><path d="M14.3 4.4Q15.400 3.600 15 2.600" fill="none" stroke="#cb570b" stroke-width="0.9"/></svg></td><td class="c6"><span class="t" style="transform:translate(-1.46px,0px) scaleX(0.9649)">US20</span></td><td class="c7"><span class="t" style="transform:translate(-1.73px,0px) scaleX(0.9825)">US20</span></td><td class="c8"><span class="t" style="transform:translate(-0.79px,0px) scaleX(0.9895)">001</span></td><td class="c9"><span class="t" style="transform:translate(-1.30px,0px) scaleX(1.0460)">1000100005</span></td><td class="c10"><span class="t" style="transform:translate(-0.75px,0px) scaleX(1.0039)">Office Sup...</span></td><td class="c11"><span class="t" style="transform:translate(-1.95px,0px) scaleX(0.9500)">NB</span></td><td class="c12"><span class="t" style="transform:translate(-1.68px,0px) scaleX(1.0762)">17:11:59</span></td><td class="c13"><span class="t" style="transform:translate(-1.37px,0px) scaleX(1.0692)">16.02.2023</span></td><td class="c14"><span class="t" style="transform:translate(-1.41px,0px) scaleX(0.9062)">READY</span></td></tr>
<tr><td class="c1"><span class="t" style="transform:translate(-0.01px,0px) scaleX(1.0530)"><u>4500004228</u></span></td><td class="c2"><span class="t" style="transform:translate(-1.41px,0px) scaleX(0.9141)">PORE</span></td><td class="c3"><span class="t" style="transform:translate(-1.77px,0px) scaleX(1.0193)">Freigabe Bestellung: 4500004...</span></td><td class="c4"><span class="t" style="transform:translate(-1.37px,0px) scaleX(1.0692)">16.02.2023</span></td><td class="c5"><svg class="att" width="17" height="16" viewBox="0 0 17 16"><path d="M5.2 1.5H14.6Q16.7 1.6 16 3.7L14.2 4.6V6.5Q15.3 8.5 15 10.8Q14.6 13.2 12.6 14.5H1.7Q0.7 13.6 1.7 12.5H5.2Q4.800 10.500 3.800 8.600Q2.500 6.200 2.900 3.900Q3.400 1.800 5.200 1.500Z" fill="#ffcb25" stroke="#cb570b" stroke-width="1.2" stroke-linejoin="round"/><path d="M2 13.5H11.800" stroke="#ffe673" stroke-width="0.9"/><path d="M5.2 12.5H11.600Q12.800 12.600 13 14" fill="none" stroke="#cb570b" stroke-width="1"/><path d="M5.8 4.2H12.600M7 4.200V7.500M10.600 4.200V7.500M6.200 7.800H13M8.800 8V11M11.800 8V11" fill="none" stroke="#f08a12" stroke-width="0.9"/><path d="M14.3 4.4Q15.400 3.600 15 2.600" fill="none" stroke="#cb570b" stroke-width="0.9"/></svg></td><td class="c6"><span class="t" style="transform:translate(-1.46px,0px) scaleX(0.9649)">US20</span></td><td class="c7"><span class="t" style="transform:translate(-1.73px,0px) scaleX(0.9825)">US20</span></td><td class="c8"><span class="t" style="transform:translate(-0.79px,0px) scaleX(0.9895)">001</span></td><td class="c9"><span class="t" style="transform:translate(-1.30px,0px) scaleX(1.0460)">1000100005</span></td><td class="c10"><span class="t" style="transform:translate(-0.75px,0px) scaleX(1.0039)">Office Sup...</span></td><td class="c11"><span class="t" style="transform:translate(-1.95px,0px) scaleX(0.9500)">NB</span></td><td class="c12"><span class="t" style="transform:translate(-1.68px,0px) scaleX(1.0762)">15:19:20</span></td><td class="c13"><span class="t" style="transform:translate(-1.37px,0px) scaleX(1.0692)">16.02.2023</span></td><td class="c14"><span class="t" style="transform:translate(-0.95px,0px) scaleX(0.8916)">SELECTED</span></td></tr>
<tr><td class="c1"><span class="t" style="transform:translate(-0.01px,0px) scaleX(1.0530)"><u>4500004228</u></span></td><td class="c2"><span class="t" style="transform:translate(-1.41px,0px) scaleX(0.9141)">PORE</span></td><td class="c3"><span class="t" style="transform:translate(-1.77px,0px) scaleX(1.0193)">Freigabe Bestellung: 4500004...</span></td><td class="c4"><span class="t" style="transform:translate(-1.37px,0px) scaleX(1.0692)">16.02.2023</span></td><td class="c5"><svg class="att" width="17" height="16" viewBox="0 0 17 16"><path d="M5.2 1.5H14.6Q16.7 1.6 16 3.7L14.2 4.6V6.5Q15.3 8.5 15 10.8Q14.6 13.2 12.6 14.5H1.7Q0.7 13.6 1.7 12.5H5.2Q4.800 10.500 3.800 8.600Q2.500 6.200 2.900 3.900Q3.400 1.800 5.200 1.500Z" fill="#ffcb25" stroke="#cb570b" stroke-width="1.2" stroke-linejoin="round"/><path d="M2 13.5H11.800" stroke="#ffe673" stroke-width="0.9"/><path d="M5.2 12.5H11.600Q12.800 12.600 13 14" fill="none" stroke="#cb570b" stroke-width="1"/><path d="M5.8 4.2H12.600M7 4.200V7.500M10.600 4.200V7.500M6.200 7.800H13M8.800 8V11M11.800 8V11" fill="none" stroke="#f08a12" stroke-width="0.9"/><path d="M14.3 4.4Q15.400 3.600 15 2.600" fill="none" stroke="#cb570b" stroke-width="0.9"/></svg></td><td class="c6"><span class="t" style="transform:translate(-1.46px,0px) scaleX(0.9649)">US20</span></td><td class="c7"><span class="t" style="transform:translate(-1.73px,0px) scaleX(0.9825)">US20</span></td><td class="c8"><span class="t" style="transform:translate(-0.79px,0px) scaleX(0.9895)">001</span></td><td class="c9"><span class="t" style="transform:translate(-1.30px,0px) scaleX(1.0460)">1000100005</span></td><td class="c10"><span class="t" style="transform:translate(-0.75px,0px) scaleX(1.0039)">Office Sup...</span></td><td class="c11"><span class="t" style="transform:translate(-1.95px,0px) scaleX(0.9500)">NB</span></td><td class="c12"><span class="t" style="transform:translate(-1.68px,0px) scaleX(1.0762)">15:19:20</span></td><td class="c13"><span class="t" style="transform:translate(-1.37px,0px) scaleX(1.0692)">16.02.2023</span></td><td class="c14"><span class="t" style="transform:translate(-0.95px,0px) scaleX(0.8916)">SELECTED</span></td></tr>
<tr><td class="c1"><span class="t" style="transform:translate(-0.01px,0px) scaleX(1.0530)"><u>4500004226</u></span></td><td class="c2"><span class="t" style="transform:translate(-1.41px,0px) scaleX(0.9141)">PORE</span></td><td class="c3"><span class="t" style="transform:translate(-1.76px,0px) scaleX(1.0103)">Release purchase order: 4500...</span></td><td class="c4"><span class="t" style="transform:translate(-1.37px,0px) scaleX(1.0692)">15.02.2023</span></td><td class="c5"><svg class="att" width="17" height="16" viewBox="0 0 17 16"><path d="M5.2 1.5H14.6Q16.7 1.6 16 3.7L14.2 4.6V6.5Q15.3 8.5 15 10.8Q14.6 13.2 12.6 14.5H1.7Q0.7 13.6 1.7 12.5H5.2Q4.800 10.500 3.800 8.600Q2.500 6.200 2.900 3.900Q3.400 1.800 5.200 1.500Z" fill="#ffcb25" stroke="#cb570b" stroke-width="1.2" stroke-linejoin="round"/><path d="M2 13.5H11.800" stroke="#ffe673" stroke-width="0.9"/><path d="M5.2 12.5H11.600Q12.800 12.600 13 14" fill="none" stroke="#cb570b" stroke-width="1"/><path d="M5.8 4.2H12.600M7 4.200V7.500M10.600 4.200V7.500M6.200 7.800H13M8.800 8V11M11.800 8V11" fill="none" stroke="#f08a12" stroke-width="0.9"/><path d="M14.3 4.4Q15.400 3.600 15 2.600" fill="none" stroke="#cb570b" stroke-width="0.9"/></svg></td><td class="c6"><span class="t" style="transform:translate(-1.46px,0px) scaleX(0.9649)">US20</span></td><td class="c7"><span class="t" style="transform:translate(-1.73px,0px) scaleX(0.9825)">US20</span></td><td class="c8"><span class="t" style="transform:translate(-1.20px,0px) scaleX(0.8978)">SG1</span></td><td class="c9"><span class="t" style="transform:translate(-1.30px,0px) scaleX(1.0460)">1000100005</span></td><td class="c10"><span class="t" style="transform:translate(-0.75px,0px) scaleX(1.0039)">Office Sup...</span></td><td class="c11"><span class="t" style="transform:translate(-1.95px,0px) scaleX(0.9500)">NB</span></td><td class="c12"><span class="t" style="transform:translate(-1.68px,0px) scaleX(1.0762)">23:59:31</span></td><td class="c13"><span class="t" style="transform:translate(-1.37px,0px) scaleX(1.0692)">15.02.2023</span></td><td class="c14"><span class="t" style="transform:translate(-0.95px,0px) scaleX(0.8916)">SELECTED</span></td></tr>
<tr><td class="c1"><span class="t" style="transform:translate(-0.01px,0px) scaleX(1.0530)"><u>4500004225</u></span></td><td class="c2"><span class="t" style="transform:translate(-1.41px,0px) scaleX(0.9141)">PORE</span></td><td class="c3"><span class="t" style="transform:translate(-1.76px,0px) scaleX(1.0103)">Release purchase order: 4500...</span></td><td class="c4"><span class="t" style="transform:translate(-1.37px,0px) scaleX(1.0692)">15.02.2023</span></td><td class="c5"><svg class="att" width="17" height="16" viewBox="0 0 17 16"><path d="M5.2 1.5H14.6Q16.7 1.6 16 3.7L14.2 4.6V6.5Q15.3 8.5 15 10.8Q14.6 13.2 12.6 14.5H1.7Q0.7 13.6 1.7 12.5H5.2Q4.800 10.500 3.800 8.600Q2.500 6.200 2.900 3.900Q3.400 1.800 5.200 1.500Z" fill="#ffcb25" stroke="#cb570b" stroke-width="1.2" stroke-linejoin="round"/><path d="M2 13.5H11.800" stroke="#ffe673" stroke-width="0.9"/><path d="M5.2 12.5H11.600Q12.800 12.600 13 14" fill="none" stroke="#cb570b" stroke-width="1"/><path d="M5.8 4.2H12.600M7 4.200V7.500M10.600 4.200V7.500M6.200 7.800H13M8.800 8V11M11.800 8V11" fill="none" stroke="#f08a12" stroke-width="0.9"/><path d="M14.3 4.4Q15.400 3.600 15 2.600" fill="none" stroke="#cb570b" stroke-width="0.9"/></svg></td><td class="c6"><span class="t" style="transform:translate(-1.46px,0px) scaleX(0.9649)">US20</span></td><td class="c7"><span class="t" style="transform:translate(-1.73px,0px) scaleX(0.9825)">US20</span></td><td class="c8"><span class="t" style="transform:translate(-1.20px,0px) scaleX(0.8978)">SG1</span></td><td class="c9"><span class="t" style="transform:translate(-1.30px,0px) scaleX(1.0460)">1000100005</span></td><td class="c10"><span class="t" style="transform:translate(-0.75px,0px) scaleX(1.0039)">Office Sup...</span></td><td class="c11"><span class="t" style="transform:translate(-1.95px,0px) scaleX(0.9500)">NB</span></td><td class="c12"><span class="t" style="transform:translate(-1.68px,0px) scaleX(1.0762)">23:41:47</span></td><td class="c13"><span class="t" style="transform:translate(-1.37px,0px) scaleX(1.0692)">15.02.2023</span></td><td class="c14"><span class="t" style="transform:translate(-0.95px,0px) scaleX(0.8916)">SELECTED</span></td></tr>
<tr><td class="c1"><span class="t" style="transform:translate(-0.01px,0px) scaleX(1.0530)"><u>4500004225</u></span></td><td class="c2"><span class="t" style="transform:translate(-1.41px,0px) scaleX(0.9141)">PORE</span></td><td class="c3"><span class="t" style="transform:translate(-1.76px,0px) scaleX(1.0103)">Release purchase order: 4500...</span></td><td class="c4"><span class="t" style="transform:translate(-1.37px,0px) scaleX(1.0692)">15.02.2023</span></td><td class="c5"><svg class="att" width="17" height="16" viewBox="0 0 17 16"><path d="M5.2 1.5H14.6Q16.7 1.6 16 3.7L14.2 4.6V6.5Q15.3 8.5 15 10.8Q14.6 13.2 12.6 14.5H1.7Q0.7 13.6 1.7 12.5H5.2Q4.800 10.500 3.800 8.600Q2.500 6.200 2.900 3.900Q3.400 1.800 5.200 1.500Z" fill="#ffcb25" stroke="#cb570b" stroke-width="1.2" stroke-linejoin="round"/><path d="M2 13.5H11.800" stroke="#ffe673" stroke-width="0.9"/><path d="M5.2 12.5H11.600Q12.800 12.600 13 14" fill="none" stroke="#cb570b" stroke-width="1"/><path d="M5.8 4.2H12.600M7 4.200V7.500M10.600 4.200V7.500M6.200 7.800H13M8.800 8V11M11.800 8V11" fill="none" stroke="#f08a12" stroke-width="0.9"/><path d="M14.3 4.4Q15.400 3.600 15 2.600" fill="none" stroke="#cb570b" stroke-width="0.9"/></svg></td><td class="c6"><span class="t" style="transform:translate(-1.46px,0px) scaleX(0.9649)">US20</span></td><td class="c7"><span class="t" style="transform:translate(-1.73px,0px) scaleX(0.9825)">US20</span></td><td class="c8"><span class="t" style="transform:translate(-1.20px,0px) scaleX(0.8978)">SG1</span></td><td class="c9"><span class="t" style="transform:translate(-1.30px,0px) scaleX(1.0460)">1000100005</span></td><td class="c10"><span class="t" style="transform:translate(-0.75px,0px) scaleX(1.0039)">Office Sup...</span></td><td class="c11"><span class="t" style="transform:translate(-1.95px,0px) scaleX(0.9500)">NB</span></td><td class="c12"><span class="t" style="transform:translate(-1.68px,0px) scaleX(1.0762)">23:41:47</span></td><td class="c13"><span class="t" style="transform:translate(-1.37px,0px) scaleX(1.0692)">15.02.2023</span></td><td class="c14"><span class="t" style="transform:translate(-0.95px,0px) scaleX(0.8916)">SELECTED</span></td></tr>
<tr><td class="c1"><span class="t" style="transform:translate(-0.37px,0px) scaleX(1.0693)"><u>1637</u></span></td><td class="c2"></td><td class="c3"></td><td class="c4"><span class="t" style="transform:translate(-1.37px,0px) scaleX(1.0692)">14.02.2023</span></td><td class="c5"><svg class="att" width="17" height="16" viewBox="0 0 17 16"><path d="M5.2 1.5H14.6Q16.7 1.6 16 3.7L14.2 4.6V6.5Q15.3 8.5 15 10.8Q14.6 13.2 12.6 14.5H1.7Q0.7 13.6 1.7 12.5H5.2Q4.800 10.500 3.800 8.600Q2.500 6.200 2.900 3.900Q3.400 1.800 5.200 1.500Z" fill="#ffcb25" stroke="#cb570b" stroke-width="1.2" stroke-linejoin="round"/><path d="M2 13.5H11.800" stroke="#ffe673" stroke-width="0.9"/><path d="M5.2 12.5H11.600Q12.800 12.600 13 14" fill="none" stroke="#cb570b" stroke-width="1"/><path d="M5.8 4.2H12.600M7 4.200V7.500M10.600 4.200V7.500M6.200 7.800H13M8.800 8V11M11.800 8V11" fill="none" stroke="#f08a12" stroke-width="0.9"/><path d="M14.3 4.4Q15.400 3.600 15 2.600" fill="none" stroke="#cb570b" stroke-width="0.9"/></svg></td><td class="c6"><span class="t" style="transform:translate(-1.46px,0px) scaleX(0.9649)">US20</span></td><td class="c7"><span class="t" style="transform:translate(-1.73px,0px) scaleX(0.9825)">US20</span></td><td class="c8"><span class="t" style="transform:translate(-0.79px,0px) scaleX(0.9895)">001</span></td><td class="c9"></td><td class="c10"></td><td class="c11"><span class="t" style="transform:translate(-1.95px,0px) scaleX(0.9500)">NB</span></td><td class="c12"><span class="t" style="transform:translate(-1.68px,0px) scaleX(1.0762)">00:00:00</span></td><td class="c13"></td><td class="c14"></td></tr>
<tr><td class="c1"><span class="t" style="transform:translate(-0.77px,0px) scaleX(1.0654)"><u>10001388</u></span></td><td class="c2"><span class="t" style="transform:translate(-1.38px,0px) scaleX(0.8780)">PRET</span></td><td class="c3"><span class="t" style="transform:translate(-1.79px,0px) scaleX(1.0387)">Edit Requisition: 10001388 / ...</span></td><td class="c4"><span class="t" style="transform:translate(-1.37px,0px) scaleX(1.0692)">28.02.2023</span></td><td class="c5"><svg class="att" width="17" height="16" viewBox="0 0 17 16"><path d="M5.2 1.5H14.6Q16.7 1.6 16 3.7L14.2 4.6V6.5Q15.3 8.5 15 10.8Q14.6 13.2 12.6 14.5H1.7Q0.7 13.6 1.7 12.5H5.2Q4.800 10.500 3.800 8.600Q2.500 6.200 2.900 3.900Q3.400 1.800 5.200 1.500Z" fill="#ffcb25" stroke="#cb570b" stroke-width="1.2" stroke-linejoin="round"/><path d="M2 13.5H11.800" stroke="#ffe673" stroke-width="0.9"/><path d="M5.2 12.5H11.600Q12.800 12.600 13 14" fill="none" stroke="#cb570b" stroke-width="1"/><path d="M5.8 4.2H12.600M7 4.200V7.500M10.600 4.200V7.500M6.200 7.800H13M8.800 8V11M11.800 8V11" fill="none" stroke="#f08a12" stroke-width="0.9"/><path d="M14.3 4.4Q15.400 3.600 15 2.600" fill="none" stroke="#cb570b" stroke-width="0.9"/></svg></td><td class="c6"><span class="t" style="transform:translate(-1.46px,0px) scaleX(0.9649)">US20</span></td><td class="c7"><span class="t" style="transform:translate(-1.73px,0px) scaleX(0.9825)">US20</span></td><td class="c8"><span class="t" style="transform:translate(-0.79px,0px) scaleX(0.9895)">001</span></td><td class="c9"></td><td class="c10"></td><td class="c11"><span class="t" style="transform:translate(-1.95px,0px) scaleX(0.9500)">NB</span></td><td class="c12"><span class="t" style="transform:translate(-1.68px,0px) scaleX(1.0762)">16:32:31</span></td><td class="c13"><span class="t" style="transform:translate(-1.37px,0px) scaleX(1.0692)">28.02.2023</span></td><td class="c14"><span class="t" style="transform:translate(-0.95px,0px) scaleX(0.8916)">SELECTED</span></td></tr>
<tr><td class="c1"><span class="t" style="transform:translate(-0.01px,0px) scaleX(1.0530)"><u>4500004196</u></span></td><td class="c2"><span class="t" style="transform:translate(-1.41px,0px) scaleX(0.9141)">PORE</span></td><td class="c3"><span class="t" style="transform:translate(-1.76px,0px) scaleX(1.0103)">Release purchase order: 4500...</span></td><td class="c4"><span class="t" style="transform:translate(-1.37px,0px) scaleX(1.0692)">10.02.2023</span></td><td class="c5"><svg class="att" width="17" height="16" viewBox="0 0 17 16"><path d="M5.2 1.5H14.6Q16.7 1.6 16 3.7L14.2 4.6V6.5Q15.3 8.5 15 10.8Q14.6 13.2 12.6 14.5H1.7Q0.7 13.6 1.7 12.5H5.2Q4.800 10.500 3.800 8.600Q2.500 6.200 2.900 3.900Q3.400 1.800 5.200 1.500Z" fill="#ffcb25" stroke="#cb570b" stroke-width="1.2" stroke-linejoin="round"/><path d="M2 13.5H11.800" stroke="#ffe673" stroke-width="0.9"/><path d="M5.2 12.5H11.600Q12.800 12.600 13 14" fill="none" stroke="#cb570b" stroke-width="1"/><path d="M5.8 4.2H12.600M7 4.200V7.500M10.600 4.200V7.500M6.200 7.800H13M8.800 8V11M11.800 8V11" fill="none" stroke="#f08a12" stroke-width="0.9"/><path d="M14.3 4.4Q15.400 3.600 15 2.600" fill="none" stroke="#cb570b" stroke-width="0.9"/></svg></td><td class="c6"><span class="t" style="transform:translate(-1.46px,0px) scaleX(0.9649)">US20</span></td><td class="c7"><span class="t" style="transform:translate(-1.73px,0px) scaleX(0.9825)">US20</span></td><td class="c8"><span class="t" style="transform:translate(-1.20px,0px) scaleX(0.8978)">SG1</span></td><td class="c9"><span class="t" style="transform:translate(-1.30px,0px) scaleX(1.0460)">1000100655</span></td><td class="c10"><span class="t" style="transform:translate(-1.78px,0px) scaleX(1.0273)">Electronic ...</span></td><td class="c11"><span class="t" style="transform:translate(-1.95px,0px) scaleX(0.9500)">NB</span></td><td class="c12"><span class="t" style="transform:translate(-1.68px,0px) scaleX(1.0762)">22:40:52</span></td><td class="c13"><span class="t" style="transform:translate(-1.37px,0px) scaleX(1.0692)">22.03.2023</span></td><td class="c14"><span class="t" style="transform:translate(-1.41px,0px) scaleX(0.9062)">READY</span></td></tr>
<tr><td class="c1"><span class="t" style="transform:translate(-0.01px,0px) scaleX(1.0530)"><u>4500004196</u></span></td><td class="c2"><span class="t" style="transform:translate(-1.41px,0px) scaleX(0.9141)">PORE</span></td><td class="c3"><span class="t" style="transform:translate(-1.76px,0px) scaleX(1.0103)">Release purchase order: 4500...</span></td><td class="c4"><span class="t" style="transform:translate(-1.37px,0px) scaleX(1.0692)">10.02.2023</span></td><td class="c5"><svg class="att" width="17" height="16" viewBox="0 0 17 16"><path d="M5.2 1.5H14.6Q16.7 1.6 16 3.7L14.2 4.6V6.5Q15.3 8.5 15 10.8Q14.6 13.2 12.6 14.5H1.7Q0.7 13.6 1.7 12.5H5.2Q4.800 10.500 3.800 8.600Q2.500 6.200 2.900 3.900Q3.400 1.800 5.200 1.500Z" fill="#ffcb25" stroke="#cb570b" stroke-width="1.2" stroke-linejoin="round"/><path d="M2 13.5H11.800" stroke="#ffe673" stroke-width="0.9"/><path d="M5.2 12.5H11.600Q12.800 12.600 13 14" fill="none" stroke="#cb570b" stroke-width="1"/><path d="M5.8 4.2H12.600M7 4.200V7.500M10.600 4.200V7.500M6.200 7.800H13M8.800 8V11M11.800 8V11" fill="none" stroke="#f08a12" stroke-width="0.9"/><path d="M14.3 4.4Q15.400 3.600 15 2.600" fill="none" stroke="#cb570b" stroke-width="0.9"/></svg></td><td class="c6"><span class="t" style="transform:translate(-1.46px,0px) scaleX(0.9649)">US20</span></td><td class="c7"><span class="t" style="transform:translate(-1.73px,0px) scaleX(0.9825)">US20</span></td><td class="c8"><span class="t" style="transform:translate(-1.20px,0px) scaleX(0.8978)">SG1</span></td><td class="c9"><span class="t" style="transform:translate(-1.30px,0px) scaleX(1.0460)">1000100655</span></td><td class="c10"><span class="t" style="transform:translate(-1.78px,0px) scaleX(1.0273)">Electronic ...</span></td><td class="c11"><span class="t" style="transform:translate(-1.95px,0px) scaleX(0.9500)">NB</span></td><td class="c12"><span class="t" style="transform:translate(-1.68px,0px) scaleX(1.0762)">22:40:52</span></td><td class="c13"><span class="t" style="transform:translate(-1.37px,0px) scaleX(1.0692)">22.03.2023</span></td><td class="c14"><span class="t" style="transform:translate(-1.41px,0px) scaleX(0.9062)">READY</span></td></tr>
<tr><td class="c1"><span class="t" style="transform:translate(-0.01px,0.6px) scaleX(1.0530)"><u>4500004148</u></span></td><td class="c2"><span class="t" style="transform:translate(-1.41px,0.6px) scaleX(0.9141)">PORE</span></td><td class="c3"><span class="t" style="transform:translate(-1.76px,0.6px) scaleX(1.0103)">Release purchase order: 4500...</span></td><td class="c4"><span class="t" style="transform:translate(-1.37px,0.6px) scaleX(1.0692)">07.01.2023</span></td><td class="c5"><svg class="att" width="17" height="16" viewBox="0 0 17 16"><path d="M5.2 1.5H14.6Q16.7 1.6 16 3.7L14.2 4.6V6.5Q15.3 8.5 15 10.8Q14.6 13.2 12.6 14.5H1.7Q0.7 13.6 1.7 12.5H5.2Q4.800 10.500 3.800 8.600Q2.500 6.200 2.900 3.900Q3.400 1.800 5.200 1.500Z" fill="#ffcb25" stroke="#cb570b" stroke-width="1.2" stroke-linejoin="round"/><path d="M2 13.5H11.800" stroke="#ffe673" stroke-width="0.9"/><path d="M5.2 12.5H11.600Q12.800 12.600 13 14" fill="none" stroke="#cb570b" stroke-width="1"/><path d="M5.8 4.2H12.600M7 4.200V7.500M10.600 4.200V7.500M6.200 7.800H13M8.800 8V11M11.800 8V11" fill="none" stroke="#f08a12" stroke-width="0.9"/><path d="M14.3 4.4Q15.400 3.600 15 2.600" fill="none" stroke="#cb570b" stroke-width="0.9"/></svg></td><td class="c6"><span class="t" style="transform:translate(-1.46px,0.6px) scaleX(0.9649)">US20</span></td><td class="c7"><span class="t" style="transform:translate(-1.73px,0.6px) scaleX(0.9825)">US20</span></td><td class="c8"><span class="t" style="transform:translate(-0.79px,0.6px) scaleX(0.9895)">001</span></td><td class="c9"><span class="t" style="transform:translate(-1.30px,0.6px) scaleX(1.0460)">1000100005</span></td><td class="c10"><span class="t" style="transform:translate(-0.75px,0.6px) scaleX(1.0039)">Office Sup...</span></td><td class="c11"><span class="t" style="transform:translate(-1.95px,0.6px) scaleX(0.9500)">NB</span></td><td class="c12"><span class="t" style="transform:translate(-1.68px,0.6px) scaleX(1.0762)">16:15:36</span></td><td class="c13"><span class="t" style="transform:translate(-1.37px,0.6px) scaleX(1.0692)">07.01.2023</span></td><td class="c14"><span class="t" style="transform:translate(-1.41px,0.6px) scaleX(0.9062)">READY</span></td></tr>
</tbody></table>
</div>

<!-- vertical scrollbar -->
<svg class="abs" style="left:1089px;top:146px" width="22" height="330" viewBox="0 0 22 330">
  <polyline class="chev" points="7.5,10.5 11,7 14.500,10.5"/>
  <polyline class="chev" points="7.5,26 11,29.500 14.500,26"/>
  <polyline class="chev" points="7.5,302.500 11,299 14.500,302.500"/>
  <polyline class="chev" points="7.5,318 11,321.500 14.500,318"/>
</svg>
<div id="vthumb" class="abs"></div>
<svg class="abs" style="left:1095px;top:200px" width="11" height="21" viewBox="0 0 11 21"><path d="M3.500 7.500h4M3.500 10.500h4M3.500 13.500h4" stroke="#fff" stroke-width="1.500"/></svg>

<!-- horizontal scrollbar -->
<svg class="abs" style="left:44px;top:476px" width="1045" height="20" viewBox="0 0 1045 20">
  <polyline class="chev" points="8.500,5.500 5,9 8.500,12.500"/>
  <polyline class="chev" points="23,5.500 26.500,9 23,12.500"/>
  <polyline class="chev" points="1019,5.500 1015.500,9 1019,12.500"/>
  <polyline class="chev" points="1033,5.500 1036.500,9 1033,12.500"/>
</svg>
<div id="hbar" class="abs"></div>
<svg class="abs" style="left:317px;top:483px" width="10" height="6" viewBox="0 0 10 6"><path d="M1.500 0.500v5M4.500 0.500v5M7.500 0.500v5" stroke="#fff" stroke-width="1.500"/></svg>

<!-- callouts -->
<svg class="abs" style="left:0;top:70px" width="44" height="90" viewBox="0 70 44 90">
  <circle cx="20.9" cy="92.15" r="20.1" fill="#05509a"/>
  <circle cx="20.9" cy="137.15" r="20.1" fill="#05509a"/>
  <path d="M24.2 103.3H21V86.6Q19.2 88.4 15.7 89.7V87Q20.4 85 22.200 81.700H24.200Z" fill="#fff"/>
  <text x="20.55" y="148.3" font-family="Liberation Sans, sans-serif" font-size="30" text-anchor="middle" fill="#fff">2</text>
</svg>
<svg class="abs" style="left:1022px;top:147px" width="44" height="44" viewBox="1022 147 44 44">
  <circle cx="1043.9" cy="169.15" r="20.1" fill="#05509a"/>
  <text x="1043.85" y="180" font-family="Liberation Sans, sans-serif" font-size="30" text-anchor="middle" fill="#fff">3</text>
</svg>
</body>
</html>
